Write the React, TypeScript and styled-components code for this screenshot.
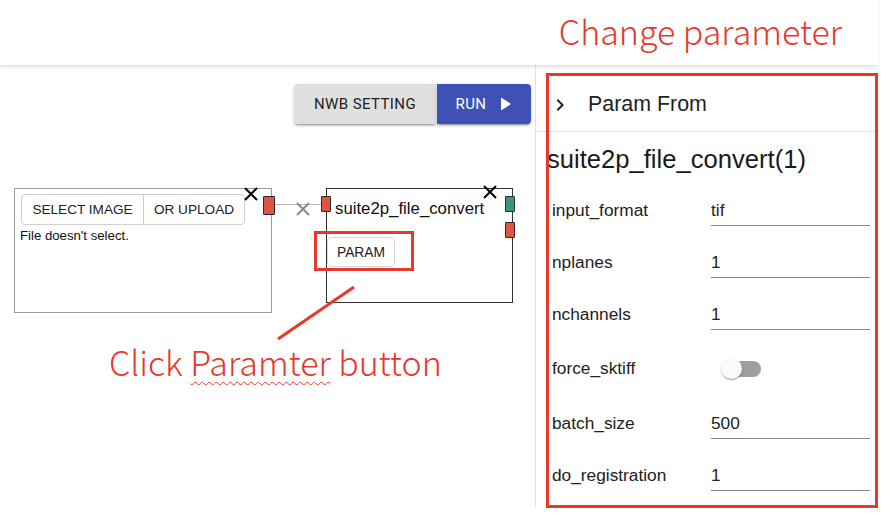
import React from "react";
import styled, { createGlobalStyle } from "styled-components";

const Global = createGlobalStyle`
  html, body { margin: 0; padding: 0; background: #fff; }
  body {
    width: 890px; height: 526px; overflow: hidden;
    font-family: "Liberation Sans", Arial, sans-serif;
    color: #222;
  }
  * { box-sizing: border-box; }
`;

const RED = "#e8372b";

const Page = styled.div`
  width: 878px;
  height: 526px;
  display: flex;
  flex-direction: column;
  position: relative;
`;

const TopBar = styled.header`
  height: 65px;
  flex: none;
  display: flex;
  align-items: center;
  justify-content: flex-end;
  padding-right: 36px;
  box-shadow: 0 2px 3px rgba(0, 0, 0, 0.13);
  position: relative;
  z-index: 1;
`;

const AnnotTitle = styled.div`
  font-family: "Noto Sans CJK JP", sans-serif;
  font-weight: 300;
  font-size: 34px;
  line-height: 1;
  color: ${RED};
  margin-top: -4px;
`;

const Main = styled.div`
  display: flex;
  height: 442px;
  flex: none;
`;

const Canvas = styled.section`
  width: 535px;
  flex: none;
  position: relative;
`;

const Toolbar = styled.div`
  display: flex;
  justify-content: flex-end;
  padding: 19px 4px 0 0;
`;

const Btn = styled.button<{ $primary?: boolean }>`
  height: 40px;
  width: ${(p) => (p.$primary ? "94px" : "142px")};
  border: none;
  font-family: Roboto, sans-serif;
  font-weight: 400;
  font-size: 15px;
  letter-spacing: 0.4px;
  text-transform: uppercase;
  display: flex;
  align-items: center;
  justify-content: center;
  gap: 14px;
  padding: 0;
  background: ${(p) => (p.$primary ? "#3f51b5" : "#e0e0e0")};
  color: ${(p) => (p.$primary ? "#fff" : "#222")};
  border-radius: ${(p) => (p.$primary ? "0 4px 4px 0" : "4px 0 0 4px")};
  box-shadow: 0 3px 1px -2px rgba(0,0,0,0.2), 0 2px 2px 0 rgba(0,0,0,0.14), 0 1px 5px 0 rgba(0,0,0,0.12);
  margin-left: ${(p) => (p.$primary ? "1px" : "0")};
`;

const Node = styled.div<{ $x: number; $y: number; $w: number; $h: number; $dark?: boolean }>`
  position: absolute;
  left: ${(p) => p.$x}px;
  top: ${(p) => p.$y}px;
  width: ${(p) => p.$w}px;
  height: ${(p) => p.$h}px;
  border: 1px solid ${(p) => (p.$dark ? "#333" : "#9a9a9a")};
  background: #fff;
`;

const InputNodeBody = styled.div`
  padding: 5px 0 0 6px;
`;

const ButtonGroup = styled.div`
  display: inline-flex;
  height: 31px;
  border: 1px solid #cfcfcf;
  border-radius: 4px;
`;

const GroupBtn = styled.div<{ $w: number; $last?: boolean }>`
  width: ${(p) => p.$w}px;
  display: flex;
  align-items: center;
  justify-content: center;
  font-size: 13.6px;
  color: #222;
  border-right: ${(p) => (p.$last ? "none" : "1px solid #cfcfcf")};
`;

const Note = styled.div`
  font-size: 13.2px;
  margin-top: 3px;
  margin-left: -1px;
  color: #111;
`;

const Handle = styled.div<{ $side: "left" | "right"; $top: number; $teal?: boolean; $w?: number; $h?: number; $out?: number }>`
  position: absolute;
  ${(p) => (p.$side === "left" ? `left: ${-(p.$out ?? 6)}px;` : `right: ${-(p.$out ?? 3)}px;`)}
  top: ${(p) => p.$top}px;
  width: ${(p) => p.$w ?? 10}px;
  height: ${(p) => p.$h ?? 16}px;
  background: ${(p) => (p.$teal ? "#3d9483" : "#e05443")};
  border: 1px solid #2a2a2a;
  border-radius: 1px;
`;

const Close = styled.svg<{ $right: number; $top: number }>`
  position: absolute;
  right: ${(p) => p.$right}px;
  top: ${(p) => p.$top}px;
  width: 14px;
  height: 14px;
`;

const NodeTitle = styled.div`
  font-size: 16.8px;
  line-height: 20px;
  padding: 10px 0 0 8px;
  color: #111;
  white-space: nowrap;
`;

const ParamBtn = styled.div`
  margin-top: 18px;
  width: 68px;
  height: 30px;
  border: 1px solid #d8d8d8;
  border-radius: 4px;
  display: flex;
  align-items: center;
  justify-content: center;
  font-size: 13.8px;
  color: #222;
`;

const Edge = styled.svg`
  position: absolute;
  left: 275px;
  top: 130px;
  width: 48px;
  height: 24px;
`;

const Side = styled.aside`
  width: 343px;
  flex: none;
  border-left: 1px solid #e0e0e0;
  display: flex;
  flex-direction: column;
`;

const AccHeader = styled.div`
  height: 67px;
  border-bottom: 1px solid #e0e0e0;
  display: flex;
  align-items: center;
  padding: 13px 0 0 12px;
  gap: 16px;
  font-size: 21.4px;
  color: #222;
`;

const ParamTitle = styled.div`
  font-size: 25.6px;
  line-height: 30px;
  margin: 12px 0 10px 11px;
  color: #1a1a1a;
  white-space: nowrap;
`;

const Row = styled.div<{ $h: number }>`
  height: ${(p) => p.$h}px;
  display: grid;
  grid-template-columns: 159px 159px;
  align-items: center;
  padding-left: 16px;
`;

const Label = styled.div`
  font-size: 17.3px;
  color: #222;
  white-space: nowrap;
`;

const Field = styled.div`
  height: 32px;
  font-size: 17.3px;
  line-height: 20px;
  padding: 6px 0 5px 0;
  border-bottom: 1px solid #8a8a8a;
  color: #222;
`;

const SwitchWrap = styled.div`
  position: relative;
  width: 40px;
  height: 22px;
  margin-left: 10px;
`;

const Track = styled.div`
  position: absolute;
  left: 5px;
  top: 3px;
  width: 35px;
  height: 16px;
  border-radius: 8px;
  background: #9e9e9e;
`;

const Thumb = styled.div`
  position: absolute;
  left: 0;
  top: 0;
  width: 21px;
  height: 21px;
  border-radius: 50%;
  background: #fafafa;
  box-shadow: 0 2px 1px -1px rgba(0,0,0,0.2), 0 1px 1px 0 rgba(0,0,0,0.14), 0 1px 3px 0 rgba(0,0,0,0.12);
`;

const AnnotBox = styled.div<{ $x: number; $y: number; $w: number; $h: number }>`
  position: absolute;
  left: ${(p) => p.$x}px;
  top: ${(p) => p.$y}px;
  width: ${(p) => p.$w}px;
  height: ${(p) => p.$h}px;
  border: 3px solid ${RED};
  pointer-events: none;
`;

const Pointer = styled.svg`
  position: absolute;
  left: 270px;
  top: 215px;
  width: 95px;
  height: 70px;
  overflow: visible;
`;

const Caption = styled.div`
  position: absolute;
  left: 109px;
  top: 275px;
  font-family: "Noto Sans CJK JP", sans-serif;
  font-weight: 300;
  font-size: 34px;
  line-height: 44px;
  color: ${RED};
  white-space: nowrap;
`;

const Squiggle = styled.span`
  text-decoration: underline wavy ${RED};
  text-decoration-thickness: 1px;
  text-underline-offset: 5px;
`;

const CloseIcon = ({ right, top }: { right: number; top: number }) => (
  <Close $right={right} $top={top} viewBox="0 0 14 14">
    <path d="M1 1L13 13M13 1L1 13" stroke="#000" strokeWidth="2" />
  </Close>
);

const params = [
  { label: "input_format", value: "tif" },
  { label: "nplanes", value: "1" },
  { label: "nchannels", value: "1" },
  { label: "force_sktiff", value: null },
  { label: "batch_size", value: "500" },
  { label: "do_registration", value: "1" },
];

export default function App() {
  return (
    <Page>
      <Global />
      <TopBar>
        <AnnotTitle>Change parameter</AnnotTitle>
      </TopBar>
      <Main>
        <Canvas>
          <Toolbar>
            <Btn>NWB Setting</Btn>
            <Btn $primary>
              Run
              <svg width="12" height="14" viewBox="0 0 12 14">
                <path d="M1 0.5L11 7L1 13.5Z" fill="#fff" />
              </svg>
            </Btn>
          </Toolbar>

          <Node $x={14} $y={123} $w={258} $h={125}>
            <InputNodeBody>
              <ButtonGroup>
                <GroupBtn $w={122}>SELECT IMAGE</GroupBtn>
                <GroupBtn $w={100} $last>OR UPLOAD</GroupBtn>
              </ButtonGroup>
              <Note>File doesn't select.</Note>
            </InputNodeBody>
            <CloseIcon right={13} top={-2} />
            <Handle $side="right" $top={7} $w={12} $h={19} $out={4} />
          </Node>

          <Edge viewBox="0 0 48 24">
            <path d="M0 9.5H47" stroke="#b8b8b8" strokeWidth="1" />
            <path d="M22 8L34 20M34 8L22 20" stroke="#8a8a8a" strokeWidth="2" />
          </Edge>

          <Node $x={326} $y={123} $w={187} $h={115} $dark>
            <Handle $side="left" $top={7} />
            <NodeTitle>suite2p_file_convert</NodeTitle>
            <ParamBtn>PARAM</ParamBtn>
            <CloseIcon right={15} top={-4} />
            <Handle $side="right" $top={7} $teal />
            <Handle $side="right" $top={33} />
          </Node>

          <AnnotBox $x={314} $y={166} $w={100} $h={40} />
          <Pointer viewBox="0 0 95 70">
            <path d="M84 7L8 59" stroke={RED} strokeWidth="3" />
          </Pointer>
          <Caption>
            Click <Squiggle>Paramter</Squiggle> button
          </Caption>
        </Canvas>

        <Side>
          <AccHeader>
            <svg width="24" height="24" viewBox="0 0 24 24">
              <path d="M10 6 8.59 7.41 13.17 12l-4.58 4.59L10 18l6-6z" fill="#222" />
            </svg>
            Param From
          </AccHeader>
          <ParamTitle>suite2p_file_convert(1)</ParamTitle>
          {params.map((p) => (
            <Row key={p.label} $h={p.value === null ? 57 : 52}>
              <Label>{p.label}</Label>
              {p.value === null ? (
                <SwitchWrap>
                  <Track />
                  <Thumb />
                </SwitchWrap>
              ) : (
                <Field>{p.value}</Field>
              )}
            </Row>
          ))}
        </Side>
      </Main>
      <AnnotBox $x={546} $y={73} $w={332} $h={435} />
    </Page>
  );
}
